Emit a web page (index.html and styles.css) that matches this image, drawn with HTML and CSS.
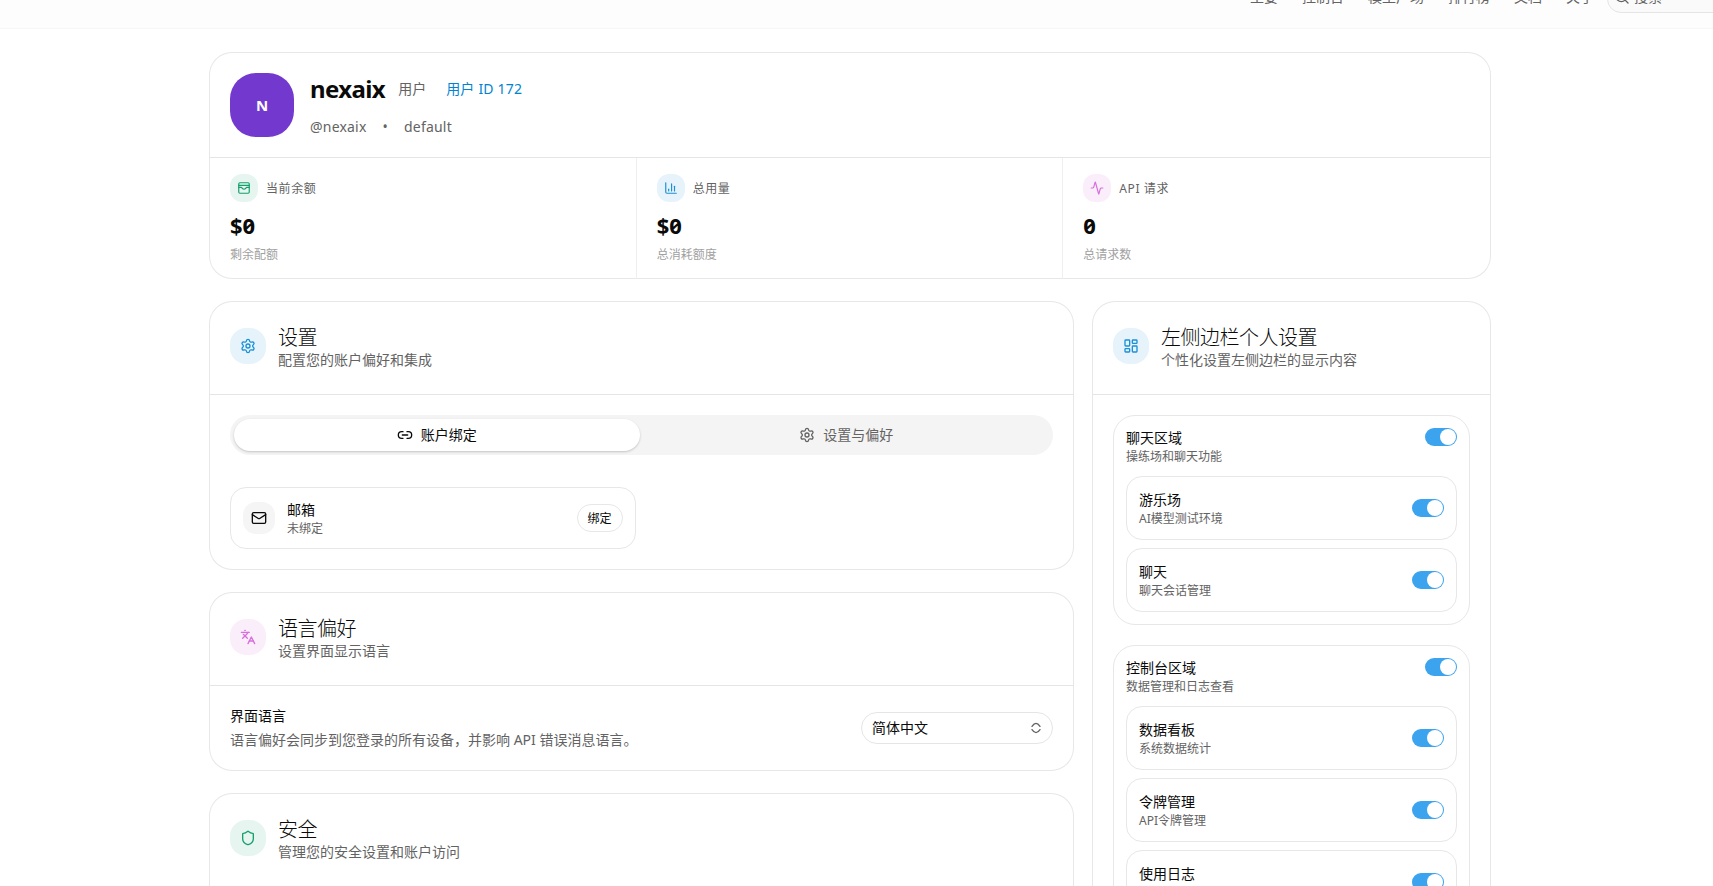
FILE: index.html
```
<!DOCTYPE html>
<html lang="zh-CN">
<head>
  <meta charset="UTF-8">
  <title>个人资料</title>
  <link rel="stylesheet" href="styles.css">
</head>
<body>
  <!-- Icons -->
  <svg class="sprite">
    <symbol id="i-settings" viewBox="0 0 24 24">
      <path d="M9.67 4.14a2.34 2.34 0 0 1 4.66 0 2.34 2.34 0 0 0 3.32 1.91 2.34 2.34 0 0 1 2.33 4.04 2.34 2.34 0 0 0 0 3.82 2.34 2.34 0 0 1-2.33 4.04 2.34 2.34 0 0 0-3.32 1.91 2.34 2.34 0 0 1-4.66 0 2.34 2.34 0 0 0-3.32-1.91 2.34 2.34 0 0 1-2.33-4.04 2.34 2.34 0 0 0 0-3.82 2.34 2.34 0 0 1 2.33-4.04 2.34 2.34 0 0 0 3.32-1.91"/>
      <circle cx="12" cy="12" r="3"/>
    </symbol>
  </svg>

  <header class="topbar">
    <nav class="nav">
      <a>主要</a>
      <a>控制台</a>
      <a>模型广场</a>
      <a>排行榜</a>
      <a>文档</a>
      <a>关于</a>
    </nav>
    <div class="search">
      <svg class="icon" viewBox="0 0 24 24"><circle cx="11" cy="11" r="8"/><path d="m21 21-4.34-4.34"/></svg>
      <span>搜索</span>
    </div>
  </header>

  <main class="page">
    <!-- Profile -->
    <section class="card">
      <div class="profile">
        <div class="avatar">N</div>
        <div>
          <div class="profile-top">
            <h1>nexaix</h1>
            <span class="role">用户</span>
            <span class="uid">用户 ID 172</span>
          </div>
          <div class="profile-sub">
            <span>@nexaix</span>
            <span>•</span>
            <span>default</span>
          </div>
        </div>
      </div>
      <div class="stats">
        <div class="stat">
          <div class="stat-head">
            <span class="badge badge-sm green">
              <svg class="icon" viewBox="0 0 24 24"><rect x="3" y="3" width="18" height="18" rx="2"/><path d="M3 7.5h18"/><path d="M3 11h4c1.200 0 1.500.8 2.200 1.700.6.8 1.600 1.300 2.800 1.300s2.200-.5 2.800-1.300c.7-.9 1-1.700 2.200-1.700h4"/></svg>
            </span>
            <span class="stat-label">当前余额</span>
          </div>
          <div class="stat-value">$0</div>
          <div class="stat-note">剩余配额</div>
        </div>
        <div class="stat">
          <div class="stat-head">
            <span class="badge badge-sm blue">
              <svg class="icon" viewBox="0 0 24 24"><path d="M3 3v16a2 2 0 0 0 2 2h16"/><path d="M18 17V9"/><path d="M13 17V5"/><path d="M8 17v-3"/></svg>
            </span>
            <span class="stat-label">总用量</span>
          </div>
          <div class="stat-value">$0</div>
          <div class="stat-note">总消耗额度</div>
        </div>
        <div class="stat">
          <div class="stat-head">
            <span class="badge badge-sm pink">
              <svg class="icon" viewBox="0 0 24 24"><path d="M22 12h-2.480a2 2 0 0 0-1.930 1.460l-2.350 8.360a.25.25 0 0 1-.48 0L9.240 2.180a.25.25 0 0 0-.48 0l-2.350 8.360A2 2 0 0 1 4.490 12H2"/></svg>
            </span>
            <span class="stat-label">API 请求</span>
          </div>
          <div class="stat-value">0</div>
          <div class="stat-note">总请求数</div>
        </div>
      </div>
    </section>

    <div class="columns">
      <div class="stack">
        <!-- Settings -->
        <section class="card">
          <div class="card-head">
            <span class="badge blue"><svg class="icon"><use href="#i-settings"/></svg></span>
            <div>
              <h2>设置</h2>
              <p>配置您的账户偏好和集成</p>
            </div>
          </div>
          <div class="card-body">
            <div class="tabs">
              <button class="tab active">
                <svg class="icon" viewBox="0 0 24 24"><path d="M9 17H7A5 5 0 0 1 7 7h2"/><path d="M15 7h2a5 5 0 1 1 0 10h-2"/><path d="M8 12h8"/></svg>
                账户绑定
              </button>
              <button class="tab">
                <svg class="icon"><use href="#i-settings"/></svg>
                设置与偏好
              </button>
            </div>
            <div class="bindings">
              <div class="binding">
                <span class="mail"><svg class="icon" viewBox="0 0 24 24"><rect x="2" y="4" width="20" height="16" rx="2"/><path d="m22 7-8.990 5.730a2 2 0 0 1-2.020 0L2 7"/></svg></span>
                <div class="item-text">
                  <strong>邮箱</strong>
                  <small>未绑定</small>
                </div>
                <button class="bind-btn">绑定</button>
              </div>
            </div>
          </div>
        </section>

        <!-- Language -->
        <section class="card">
          <div class="card-head">
            <span class="badge pink"><svg class="icon" viewBox="0 0 24 24"><path d="m5 8 6 6"/><path d="m4 14 6-6 2-3"/><path d="M2 5h12"/><path d="M7 2h1"/><path d="m22 22-5-10-5 10"/><path d="M14 18h6"/></svg></span>
            <div>
              <h2>语言偏好</h2>
              <p>设置界面显示语言</p>
            </div>
          </div>
          <div class="card-body language">
            <div>
              <div class="language-label">界面语言</div>
              <p>语言偏好会同步到您登录的所有设备，并影响 API 错误消息语言。</p>
            </div>
            <button class="select">
              <span>简体中文</span>
              <svg class="icon" viewBox="0 0 24 24"><path d="M18 9.500C17 8 14 5 12 5S7 8 6 9.500"/><path d="M18 14.500C17 16 14 19 12 19s-5-3-6-4.500"/></svg>
            </button>
          </div>
        </section>

        <!-- Security -->
        <section class="card">
          <div class="card-head">
            <span class="badge green"><svg class="icon" viewBox="0 0 24 24"><path d="M20 13c0 5-3.500 7.500-7.660 8.950a1 1 0 0 1-.67-.01C7.500 20.500 4 18 4 13V6a1 1 0 0 1 1-1c2 0 4.500-1.200 6.240-2.720a1.170 1.170 0 0 1 1.520 0C14.510 3.810 17 5 19 5a1 1 0 0 1 1 1z"/></svg></span>
            <div>
              <h2>安全</h2>
              <p>管理您的安全设置和账户访问</p>
            </div>
          </div>
          <div class="card-body"></div>
        </section>
      </div>

      <!-- Sidebar settings -->
      <section class="card">
        <div class="card-head">
          <span class="badge blue"><svg class="icon" viewBox="0 0 24 24"><rect x="3" y="3" width="7" height="9" rx="1"/><rect x="14" y="3" width="7" height="5" rx="1"/><rect x="14" y="12" width="7" height="9" rx="1"/><rect x="3" y="16" width="7" height="5" rx="1"/></svg></span>
          <div>
            <h2>左侧边栏个人设置</h2>
            <p>个性化设置左侧边栏的显示内容</p>
          </div>
        </div>
        <div class="card-body groups">
          <div class="group">
            <div class="group-head">
              <div class="item-text"><strong>聊天区域</strong><small>操练场和聊天功能</small></div>
              <span class="switch"></span>
            </div>
            <div class="group-items">
              <div class="item">
                <div class="item-text"><strong>游乐场</strong><small>AI模型测试环境</small></div>
                <span class="switch"></span>
              </div>
              <div class="item">
                <div class="item-text"><strong>聊天</strong><small>聊天会话管理</small></div>
                <span class="switch"></span>
              </div>
            </div>
          </div>
          <div class="group">
            <div class="group-head">
              <div class="item-text"><strong>控制台区域</strong><small>数据管理和日志查看</small></div>
              <span class="switch"></span>
            </div>
            <div class="group-items">
              <div class="item">
                <div class="item-text"><strong>数据看板</strong><small>系统数据统计</small></div>
                <span class="switch"></span>
              </div>
              <div class="item">
                <div class="item-text"><strong>令牌管理</strong><small>API令牌管理</small></div>
                <span class="switch"></span>
              </div>
              <div class="item">
                <div class="item-text"><strong>使用日志</strong><small>&nbsp;</small></div>
                <span class="switch"></span>
              </div>
            </div>
          </div>
        </div>
      </section>
    </div>
  </main>
</body>
</html>
```

FILE: styles.css
```
* {
  box-sizing: border-box;
}

body {
  margin: 0;
  background: #fff;
  color: #0a0a0a;
  font-family: "Noto Sans", "Noto Sans CJK SC", sans-serif;
  font-size: 14px;
  line-height: 20px;
}

html,
body {
  height: 886px;
  overflow: hidden;
}

h1, h2, p {
  margin: 0;
}

button {
  font: inherit;
  color: inherit;
  border: none;
  background: none;
  padding: 0;
}

.sprite {
  display: none;
}

.icon {
  width: 16px;
  height: 16px;
  flex-shrink: 0;
  fill: none;
  stroke: currentColor;
  stroke-width: 2;
  stroke-linecap: round;
  stroke-linejoin: round;
}

/* Top bar, scrolled partly out of view */
.topbar {
  display: flex;
  align-items: center;
  height: 64px;
  margin-top: -35px;
  padding-left: 1250px;
  background: #fdfdfd;
  border-bottom: 1px solid #f7f7f7;
  color: #636363;
}

.nav {
  display: flex;
  gap: 24px;
  white-space: nowrap;
}

.search {
  display: flex;
  align-items: center;
  gap: 4px;
  flex: 0 0 160px;
  height: 32px;
  margin-left: 13px;
  padding: 0 6px;
  border: 1px solid #e5e5e5;
  border-radius: 14px;
  background: #fafafa;
}

.page {
  display: flex;
  flex-direction: column;
  gap: 24px;
  width: 1280px;
  margin: 24px 0 0 210px;
}

.card {
  border-radius: 22px;
  background: #fff;
  box-shadow: 0 0 0 1px #e7e7e7;
}

/* Profile */
.profile {
  display: flex;
  gap: 16px;
  height: 104px;
  padding: 20px;
}

.avatar {
  display: flex;
  align-items: center;
  justify-content: center;
  width: 64px;
  height: 64px;
  border-radius: 26px;
  background: #7339cf;
  color: #fff;
  font-size: 15px;
  font-weight: 700;
}

.profile-top {
  display: flex;
  align-items: center;
  height: 32px;
}

.profile-top h1 {
  font-size: 24px;
  font-weight: 700;
  letter-spacing: -0.6px;
}

.role {
  margin-left: 13px;
  color: #636363;
}

.uid {
  margin-left: 20px;
  color: #0084d1;
  letter-spacing: 0.2px;
}

.profile-sub {
  display: flex;
  gap: 16px;
  margin-top: 12px;
  color: #636363;
  letter-spacing: 0.2px;
}

/* Stats */
.stats {
  display: grid;
  grid-template-columns: repeat(3, 1fr);
  height: 121px;
  border-top: 1px solid #e5e5e5;
}

.stat {
  padding: 16px 20px;
  border-right: 1px solid #efefef;
}

.stat:last-child {
  border-right: none;
}

.stat-head {
  display: flex;
  align-items: center;
  gap: 8px;
}

.stat-label {
  padding-top: 2px;
  color: #636363;
  font-size: 12px;
  letter-spacing: 0.6px;
}

.stat-value {
  margin-top: 9px;
  font-size: 22px;
  line-height: 28px;
  font-weight: 700;
  font-feature-settings: "zero";
}

.stat-note {
  margin-top: 8px;
  color: #a1a1a1;
  font-size: 12px;
  line-height: 16px;
}

.badge {
  display: flex;
  align-items: center;
  justify-content: center;
  flex-shrink: 0;
  width: 36px;
  height: 36px;
  margin-top: 2px;
  border-radius: 16px;
}

.badge-sm {
  width: 28px;
  height: 28px;
  margin-top: 0;
  border-radius: 12px;
}

.badge-sm .icon {
  width: 14px;
  height: 14px;
}

.green {
  background: #e6f5ef;
  color: #159f6c;
}

.blue {
  background: #e6f3fb;
  color: #1a90d6;
}

.pink {
  background: #fbeefb;
  color: #d76fdc;
}

/* Cards */
.columns {
  display: grid;
  grid-template-columns: 863px 397px;
  gap: 20px;
}

.stack {
  display: flex;
  flex-direction: column;
  gap: 24px;
}

.card-head {
  display: flex;
  align-items: flex-start;
  gap: 12px;
  padding: 24px 20px;
  border-bottom: 1px solid #e5e5e5;
}

.card-head h2 {
  font-size: 20px;
  line-height: 24px;
  font-weight: 300;
  letter-spacing: -0.5px;
}

.card-head p,
.language p {
  color: #636363;
}

.card-body {
  padding: 20px;
}

.tabs {
  display: grid;
  grid-template-columns: 1fr 1fr;
  gap: 4px;
  padding: 4px;
  border-radius: 20px;
  background: #f4f4f4;
}

.tab {
  display: flex;
  align-items: center;
  justify-content: center;
  gap: 8px;
  height: 32px;
  border-radius: 16px;
  color: #636363;
}

.tab.active {
  background: #fff;
  color: #0a0a0a;
  box-shadow: 0 1px 3px rgba(0, 0, 0, 0.1), 0 1px 2px rgba(0, 0, 0, 0.1);
}

.bindings {
  display: grid;
  grid-template-columns: 1fr 1fr;
  gap: 12px;
  margin-top: 32px;
}

.binding {
  display: flex;
  align-items: center;
  gap: 12px;
  height: 62px;
  padding: 0 12px;
  border: 1px solid #e7e7e7;
  border-radius: 16px;
}

.mail {
  display: flex;
  align-items: center;
  justify-content: center;
  width: 32px;
  height: 32px;
  border-radius: 13px;
  background: #f5f5f5;
}

.item-text {
  flex: 1;
}

.item-text strong {
  display: block;
  font-weight: 400;
}

.item-text small {
  display: block;
  margin-bottom: -1px;
  padding-top: 1px;
  color: #636363;
  font-size: 12px;
  line-height: 16px;
}

.bind-btn {
  width: 46px;
  height: 28px;
  padding-top: 2px;
  border: 1px solid #e7e7e7;
  border-radius: 14px;
  font-size: 12px;
}

.language {
  display: flex;
  align-items: center;
  justify-content: space-between;
}

.language-label {
  margin-bottom: 4px;
}

.select {
  display: flex;
  align-items: center;
  justify-content: space-between;
  width: 192px;
  height: 32px;
  padding: 0 8px 0 10px;
  border: 1px solid #e5e5e5;
  border-radius: 16px;
}

.select .icon {
  color: #636363;
}

/* Sidebar groups */
.groups {
  display: flex;
  flex-direction: column;
  gap: 20px;
}

.group {
  padding: 12px;
  border: 1px solid #e7e7e7;
  border-radius: 22px;
}

.group-head {
  display: flex;
  align-items: flex-start;
}

/* keeps the 1px text shift from shrinking the header */
.group-head .item-text {
  height: 36px;
}

.group-items {
  display: flex;
  flex-direction: column;
  gap: 8px;
  margin-top: 12px;
}

.item {
  display: flex;
  align-items: center;
  height: 64px;
  padding: 0 12px;
  border: 1px solid #e7e7e7;
  border-radius: 16px;
}

.switch {
  display: flex;
  justify-content: flex-end;
  width: 32px;
  height: 18px;
  padding: 1px;
  border-radius: 9px;
  background: #3ca3ee;
}

.switch::after {
  content: "";
  width: 16px;
  height: 16px;
  border-radius: 50%;
  background: #fff;
}
```
